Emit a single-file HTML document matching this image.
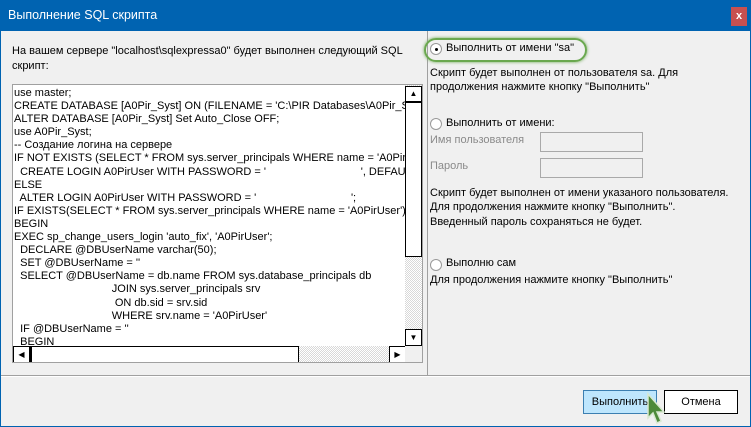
<!DOCTYPE html>
<html><head><meta charset="utf-8"><style>
*{margin:0;padding:0;box-sizing:border-box}
body{width:751px;height:427px;overflow:hidden;background:#0063b1;font-family:"Liberation Sans",sans-serif;font-size:11px;color:#000;position:relative}
.win{position:absolute;left:1px;top:31px;width:749px;height:395px;background:#f0f0f0}
.title{position:absolute;left:8px;top:8px;color:#fff;font-size:12.5px}
.close{position:absolute;left:731px;top:7px;width:16px;height:19px;background:#c75050;color:#fff;font-size:11px;font-weight:bold;text-align:center;line-height:18px}
.a{position:absolute;white-space:nowrap}
.memo{position:absolute;left:12px;top:84px;width:411px;height:279px;border:1px solid #a0a0a0;background:#fff;overflow:hidden}
.memo pre{font-family:"Liberation Sans",sans-serif;font-size:11px;line-height:13.1px;position:absolute;left:1px;top:2px;white-space:pre}
.vs{position:absolute;left:392px;top:0;width:17px;height:261px;background:repeating-conic-gradient(#fff 0 25%,#d8d8d8 0 50%) 0 0/2px 2px}
.hs{position:absolute;left:0;top:261px;width:392px;height:17px;background:repeating-conic-gradient(#fff 0 25%,#d8d8d8 0 50%) 0 0/2px 2px}
.corner{position:absolute;left:392px;top:261px;width:17px;height:17px;background:#f0f0f0}
.btnb{position:absolute;background:#fff;border:1px solid #000}
.rb{position:absolute;width:12px;height:12px;border-radius:50%;border:1px solid #999;background:#fff}
.inp{position:absolute;width:103px;height:20px;border:1px solid #a9a9a9;background:#f0f0f0}
.gray{color:#8a8a8a}
.btn{position:absolute;height:24px;text-align:center;line-height:22px;font-size:11px}
</style></head><body>
<div class="title">Выполнение SQL скрипта</div>
<div class="close">x</div>
<div class="win">
<div class="a" style="left:11px;top:13px;line-height:15px">На вашем сервере "localhost\sqlexpressa0" будет выполнен следующий SQL<br>скрипт:</div>
<div style="position:absolute;left:426px;top:0;width:1px;height:344px;background:#a0a0a0"></div>
<div style="position:absolute;left:0;top:344px;width:749px;height:1px;background:#a0a0a0"></div>
<div style="position:absolute;left:0;top:345px;width:749px;height:1px;background:#fff"></div>
</div>
<div class="memo">
<pre>use master;
CREATE DATABASE [A0Pir_Syst] ON (FILENAME = 'C:\PIR Databases\A0Pir_Syst_
ALTER DATABASE [A0Pir_Syst] Set Auto_Close OFF;
use A0Pir_Syst;
-- Создание логина на сервере
IF NOT EXISTS (SELECT * FROM sys.server_principals WHERE name = 'A0PirUser')
  CREATE LOGIN A0PirUser WITH PASSWORD = '                               ', DEFAULT_DAT
ELSE
  ALTER LOGIN A0PirUser WITH PASSWORD = '                               ';
IF EXISTS(SELECT * FROM sys.server_principals WHERE name = 'A0PirUser')
BEGIN
EXEC sp_change_users_login 'auto_fix', 'A0PirUser';
  DECLARE @DBUserName varchar(50);
  SET @DBUserName = ''
  SELECT @DBUserName = db.name FROM sys.database_principals db
                                JOIN sys.server_principals srv
                                 ON db.sid = srv.sid
                                WHERE srv.name = 'A0PirUser'
  IF @DBUserName = ''
  BEGIN</pre>
<div class="vs">
 <div class="btnb" style="left:0;top:1px;width:17px;height:16px;font-size:8px;text-align:center;line-height:14px">▲</div>
 <div class="btnb" style="left:0;top:17px;width:17px;height:155px"></div>
 <div class="btnb" style="left:0;top:244px;width:17px;height:17px;font-size:8px;text-align:center;line-height:15px">▼</div>
</div>
<div class="hs">
 <div class="btnb" style="left:0;top:0;width:17px;height:17px;font-size:8px;text-align:center;line-height:15px">◀</div>
 <div class="btnb" style="left:17px;top:0;width:269px;height:17px;border-left-width:2px"></div>
 <div class="btnb" style="left:376px;top:0;width:17px;height:17px;font-size:8px;text-align:center;line-height:15px">▶</div>
</div>
<div class="corner"></div>
</div>

<div style="position:absolute;left:424px;top:38px;width:163px;height:24px;border:2px solid #6aa84f;border-radius:12px;box-shadow:0 0 3px #6aa84f"></div>
<div class="rb" style="left:430px;top:43px"><div style="position:absolute;left:3.5px;top:3.5px;width:3px;height:3px;border-radius:50%;background:#000"></div></div>
<div class="a" style="left:446px;top:42px">Выполнить от имени "sa"</div>
<div class="a" style="left:430px;top:66px;line-height:14px">Скрипт будет выполнен от пользователя sa. Для<br>продолжения нажмите кнопку "Выполнить"</div>

<div class="rb" style="left:430px;top:118px"></div>
<div class="a" style="left:446px;top:117px">Выполнить от имени:</div>
<div class="a gray" style="left:430px;top:134px">Имя пользователя</div>
<div class="inp" style="left:540px;top:132px"></div>
<div class="a gray" style="left:430px;top:160px">Пароль</div>
<div class="inp" style="left:540px;top:158px"></div>
<div class="a" style="left:430px;top:186px;line-height:14px">Скрипт будет выполнен от имени указаного пользователя.<br>Для продолжения нажмите кнопку "Выполнить".</div>
<div class="a" style="left:430px;top:216px">Введенный пароль сохраняться не будет.</div>

<div class="rb" style="left:430px;top:259px"></div>
<div class="a" style="left:446px;top:257px">Выполню сам</div>
<div class="a" style="left:430px;top:274px">Для продолжения нажмите кнопку "Выполнить"</div>

<div class="btn" style="left:583px;top:390px;width:74px;background:#bee6fd;border:1px solid #3c7fb1">Выполнить</div>
<div class="btn" style="left:664px;top:390px;width:74px;background:#fff;border:1px solid #000">Отмена</div>
<svg style="position:absolute;left:645px;top:392px" width="24" height="34" viewBox="0 0 24 34"><path d="M3 2 L3 26 L8 21 L12 31 L16 29 L12 20 L19 20 Z" fill="#4e8a3a" stroke="#d8e8d0" stroke-width="1.5"/></svg>
</body></html>
